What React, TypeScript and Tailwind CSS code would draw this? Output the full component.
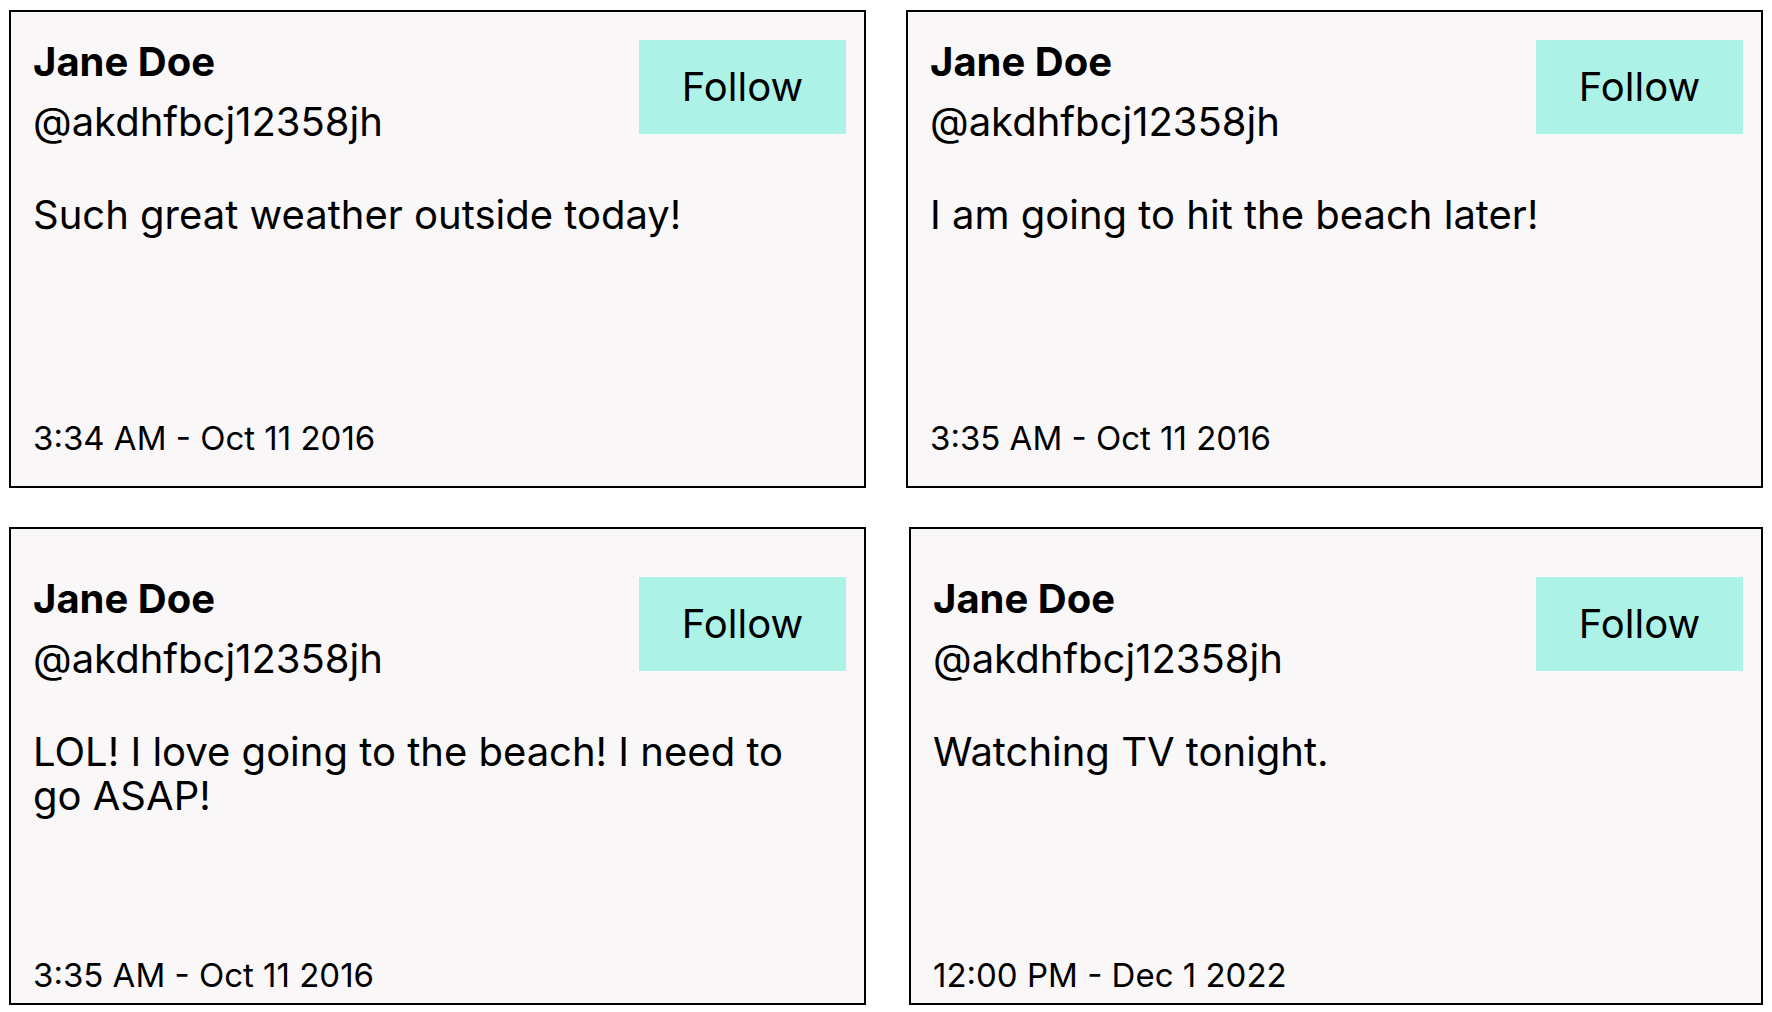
import React from "react";

type Tweet = {
    name: string;
    handle: string;
    text: string;
    time: string;
};

const tweets: Tweet[] = [
    { name: "Jane Doe", handle: "@akdhfbcj12358jh", text: "Such great weather outside today!", time: "3:34 AM - Oct 11 2016" },
    { name: "Jane Doe", handle: "@akdhfbcj12358jh", text: "I am going to hit the beach later!", time: "3:35 AM - Oct 11 2016" },
    { name: "Jane Doe", handle: "@akdhfbcj12358jh", text: "LOL! I love going to the beach! I need to go ASAP!", time: "3:35 AM - Oct 11 2016" },
    { name: "Jane Doe", handle: "@akdhfbcj12358jh", text: "Watching TV tonight.", time: "12:00 PM - Dec 1 2022" },
];

const TweetCard = ({ tweet, lower, nudge }: { tweet: Tweet; lower: boolean; nudge: boolean }) => {
    return (
        <div
            className={`flex flex-col h-[478px] border-2 border-black bg-[#f9f7f8] pl-[22px] pr-[18px] ${
                lower ? "pt-[48px] pb-[10px]" : "pt-[28px] pb-[30px]"
            } ${nudge ? "ml-[3px]" : ""}`}
        >
            {/* Header */}
            <div className="flex justify-between items-start">
                <div>
                    <p className="text-[40px] leading-[44px] font-bold">{tweet.name}</p>
                    <p className="text-[40px] leading-[44px] mt-[16px]">{tweet.handle}</p>
                </div>
                <button className="w-[207px] h-[94px] bg-[#adf2e7] text-[40px] flex items-center justify-center">
                    Follow
                </button>
            </div>

            {/* Body */}
            <p className="text-[40px] leading-[44px] mt-[49px] max-w-[780px]">{tweet.text}</p>

            {/* Timestamp */}
            <p className="mt-auto text-[33px] leading-[36px]">{tweet.time}</p>
        </div>
    );
};

export default function App() {
    return (
        <div
            className="min-h-screen bg-white text-black grid grid-cols-2 gap-x-[40px] gap-y-[39px] px-[9px] pt-[10px] pb-[6px] content-start"
            style={{ fontFamily: "Inter, 'Noto Sans', sans-serif" }}
        >
            {tweets.map((tweet, index) => (
                <TweetCard key={index} tweet={tweet} lower={index > 1} nudge={index === 3} />
            ))}
        </div>
    );
}
